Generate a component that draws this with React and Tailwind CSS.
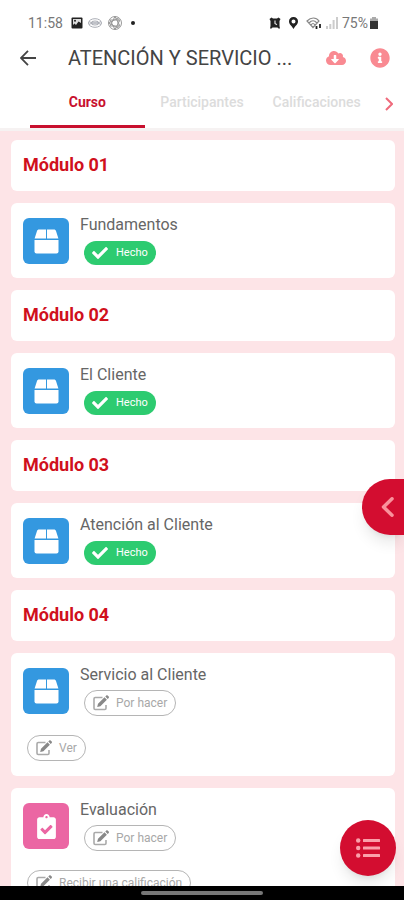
import { FaCheck, FaClipboardCheck, FaCloudDownloadAlt, FaInfoCircle } from 'react-icons/fa';

const sections = [
  { title: 'Módulo 01', items: [{ name: 'Fundamentos', done: true }] },
  { title: 'Módulo 02', items: [{ name: 'El Cliente', done: true }] },
  { title: 'Módulo 03', items: [{ name: 'Atención al Cliente', done: true }] },
  {
    title: 'Módulo 04',
    items: [
      { name: 'Servicio al Cliente', extra: 'Ver' },
      { name: 'Evaluación', quiz: true, extra: 'Recibir una calificación' },
    ],
  },
];

function StatusBar() {
  return (
    <div className="flex h-9 items-center justify-between pt-[10px] pr-6 pl-7 text-sm text-[#777]">
      <div className="flex items-center gap-1">
        <span className="mr-1">11:58</span>
        <svg className="h-3 w-3" viewBox="0 0 12 12">
          <rect x="0.5" y="0.5" width="11" height="11" rx="1" fill="#222" />
          <path d="M2 2h8v4L7.500 4.500 5 8 3.500 6.500 2 8z" fill="#ddd" />
          <circle cx="4" cy="3.800" r="1" fill="#222" />
        </svg>
        <svg className="h-3 w-4" viewBox="0 0 16 12" fill="none" stroke="#aaadb5">
          <ellipse cx="8" cy="6" rx="6.500" ry="4.300" />
          <ellipse cx="8" cy="6" rx="4" ry="2" />
          <path d="M2 4.500c3 2 9 2 12 0M2 7.500c3-2 9-2 12 0" />
        </svg>
        <svg className="h-4 w-4" viewBox="0 0 16 16" fill="none" stroke="#999">
          <circle cx="8" cy="8" r="6.500" />
          <path d="M8 1.500l5 9.500H3zM8 14.500L3 5h10zM1.500 8L11 3v10z" />
        </svg>
        <span className="ml-1 h-1 w-1 rounded-full bg-[#222]" />
      </div>
      <div className="flex items-center gap-1">
        <svg className="h-3 w-3" viewBox="0 0 12 12">
          <path d="M0.500 2L2.500 0.500l1.500 1h4l1.500-1 2 1.500-1 2v5l.5 2.500H9.500l-1-1h-5l-1 1H1l.5-2.500V4z" fill="#222" />
          <path d="M6 3.500v3l2 1.200" fill="none" stroke="#ddd" strokeWidth="1.200" />
        </svg>
        <svg className="ml-1 h-3 w-[9px]" viewBox="0 0 9 12">
          <path fill="#222" fillRule="evenodd" d="M4.500 0A4.400 4.400 0 0 0 0 4.500C0 7.500 3 9 4.500 12 6 9 9 7.500 9 4.500A4.400 4.400 0 0 0 4.500 0zm0 2.500a2 2 0 1 1 0 4 2 2 0 0 1 0-4z" />
        </svg>
        <svg className="ml-1 h-3 w-4" viewBox="0 0 16 12" fill="none" stroke="#888" strokeWidth="1.200">
          <path d="M1 4c4-4 9-4 12 0L7 10.500zM3 6c3-3 5-3 8 0M5 8c1.500-2 2.500-2 4 0" />
          <path d="M10.500 9v3M14 7v4" stroke="#222" strokeWidth="1.800" />
        </svg>
        <svg className="h-3 w-3" viewBox="0 0 12 12" fill="#ccc">
          <path d="M0 9h2v3H0zM3.300 7h2v5h-2zM6.600 3h2v9h-2zM10 0h2v12h-2z" />
        </svg>
        <div className="flex items-center">
          <span>75%</span>
          <svg className="h-3 w-3" viewBox="0 0 12 12">
            <path d="M4 0h4v1.500h2V12H2V1.500h2z" fill="#aaa" />
            <path d="M2 4h8v8H2z" fill="#333" />
          </svg>
        </div>
      </div>
    </div>
  );
}

function Header() {
  return (
    <header className="border-b-3 border-[#f6f2f2] bg-white">
      <StatusBar />
      <div className="flex h-[43px] items-center pr-[14px] pl-4">
        <button type="button" aria-label="Atrás" className="flex h-6 w-6 items-center justify-center">
          <svg className="h-4 w-4" viewBox="0 0 16 16" fill="none" stroke="#444" strokeWidth="1.800">
            <path d="M8 0.800L0.900 8L8 15.200M0.900 8H16" />
          </svg>
        </button>
        <h1 className="ml-7 min-w-0 flex-1 truncate text-xl text-[#444]">ATENCIÓN Y SERVICIO ...</h1>
        <div className="flex items-center gap-6 text-[#f98a92]">
          <button type="button" aria-label="Descargar">
            <FaCloudDownloadAlt className="h-5 w-5" />
          </button>
          <button type="button" aria-label="Información">
            <FaInfoCircle className="h-5 w-5" />
          </button>
        </div>
      </div>
      <nav className="flex h-[49px] items-stretch pl-[30px] text-sm font-medium text-[#dcdcdc]">
        <a href="#curso" className="flex flex-1 items-center justify-center border-b-3 border-[#c8102e] font-bold text-[#c8102e]">
          Curso
        </a>
        <a href="#participantes" className="flex flex-1 items-center justify-center border-b-3 border-transparent">
          Participantes
        </a>
        <a href="#calificaciones" className="flex flex-1 items-center justify-center border-b-3 border-transparent">
          Calificaciones
        </a>
        <button type="button" aria-label="Siguiente" className="flex w-[30px] items-center justify-center">
          <svg className="h-4 w-2" viewBox="0 0 8 14" fill="none" stroke="#ef6b7c" strokeWidth="2">
            <path d="M1 1l6 6-6 6" />
          </svg>
        </button>
      </nav>
    </header>
  );
}

function BoxIcon() {
  return (
    <svg className="h-[25px] w-[25px]" viewBox="0 0 25 25" fill="currentColor">
      <path d="M5 0.500h7V9.500H0.600L3 2C3.400 1 4 0.500 5 0.500zM13 0.500h7c1 0 1.600 0.500 2 1.500l2.400 7.500H13z" />
      <path d="M0.500 11h24v11.500a2 2 0 0 1-2 2h-20a2 2 0 0 1-2-2z" />
    </svg>
  );
}

function EditIcon() {
  return (
    <svg className="h-4 w-4" viewBox="0 0 16 16">
      <path d="M9.500 2.500H2.200c-.7 0-1.200.5-1.200 1.200v9.600c0 .7.5 1.200 1.200 1.200h9.600c.7 0 1.200-.5 1.200-1.200V10" fill="none" stroke="#aaa" strokeWidth="1.600" />
      <path d="M11.500 2.300l2.400 2.400-6.500 6.500-3.200.8.800-3.200zM12.300 1.500l1-1c.4-.4.900-.4 1.300 0l1.100 1.100c.4.4.4.9 0 1.300l-1 1z" fill="#888" />
    </svg>
  );
}

function Pill({ done, children }) {
  if (done) {
    return (
      <span className="inline-flex h-6 items-center gap-2 rounded-full bg-[#2dcb70] px-2 text-[11px] text-white">
        <FaCheck className="h-4 w-4" />
        {children}
      </span>
    );
  }
  return (
    <button type="button" className="inline-flex h-[26px] items-center gap-[7px] rounded-full border border-[#b5b5b5] px-2 text-xs text-[#a8a8a8]">
      <EditIcon />
      {children}
    </button>
  );
}

function Activity({ name, done, quiz, extra }) {
  return (
    <article className={`rounded-md bg-white px-3 pt-3 ${extra ? 'pb-[15px]' : 'pb-3'}`}>
      <div className="flex gap-[11px]">
        <div className={`mt-[3px] flex h-[46px] w-[46px] shrink-0 items-center justify-center rounded-md text-white ${quiz ? 'bg-[#eb66a3]' : 'bg-[#3498e0]'}`}>
          {quiz ? <FaClipboardCheck className="h-[25px] w-[25px]" /> : <BoxIcon />}
        </div>
        <div>
          <h3 className="text-base leading-5 text-[#666]">{name}</h3>
          <div className="mt-[5px] ml-1 flex h-[26px] items-center">
            <Pill done={done}>{done ? 'Hecho' : 'Por hacer'}</Pill>
          </div>
        </div>
      </div>
      {extra && (
        <div className="mt-[19px] ml-1 flex">
          <Pill>{extra}</Pill>
        </div>
      )}
    </article>
  );
}

export default function App() {
  return (
    <div className="relative flex h-screen flex-col overflow-hidden bg-[#fde4e7] font-[Roboto,sans-serif]">
      <Header />
      <main className="flex min-h-0 flex-1 flex-col gap-3 overflow-hidden py-[9px] pr-[9px] pl-[11px]">
        {sections.map((section) => (
          <section key={section.title} className="flex shrink-0 flex-col gap-3">
            <h2 className="rounded-md bg-white px-3 pt-[13px] pb-[14px] text-lg leading-6 font-bold text-[#d0101c]">{section.title}</h2>
            {section.items.map((item) => (
              <Activity key={item.name} {...item} />
            ))}
          </section>
        ))}
      </main>
      <footer className="flex h-[14px] shrink-0 items-center justify-center bg-black">
        <span className="h-1 w-[122px] rounded-full bg-[#777]" />
      </footer>

      <button
        type="button"
        aria-label="Abrir panel"
        className="absolute top-[479px] right-0 flex h-14 w-[42px] items-center rounded-l-full bg-[#d30d30] pl-[18px] shadow-lg"
      >
        <svg className="h-5 w-4" viewBox="0 0 16 20" fill="none" stroke="#f9929c" strokeWidth="3.500" strokeLinecap="round" strokeLinejoin="round">
          <path d="M12 1.800L3.500 10l8.500 8.200" />
        </svg>
      </button>
      <button
        type="button"
        aria-label="Índice del curso"
        className="absolute right-2 bottom-6 flex h-14 w-14 items-center justify-center rounded-full bg-[#d30d30] shadow-lg"
      >
        <svg className="h-5 w-6" viewBox="0 0 24 20" fill="#fba0aa">
          <circle cx="2.200" cy="2.500" r="2.200" />
          <circle cx="2.200" cy="10" r="2.200" />
          <circle cx="2.200" cy="17.500" r="2.200" />
          <rect x="7" y="1" width="17" height="3" rx="0.500" />
          <rect x="7" y="8.500" width="17" height="3" rx="0.500" />
          <rect x="7" y="16" width="17" height="3" rx="0.500" />
        </svg>
      </button>
    </div>
  );
}
